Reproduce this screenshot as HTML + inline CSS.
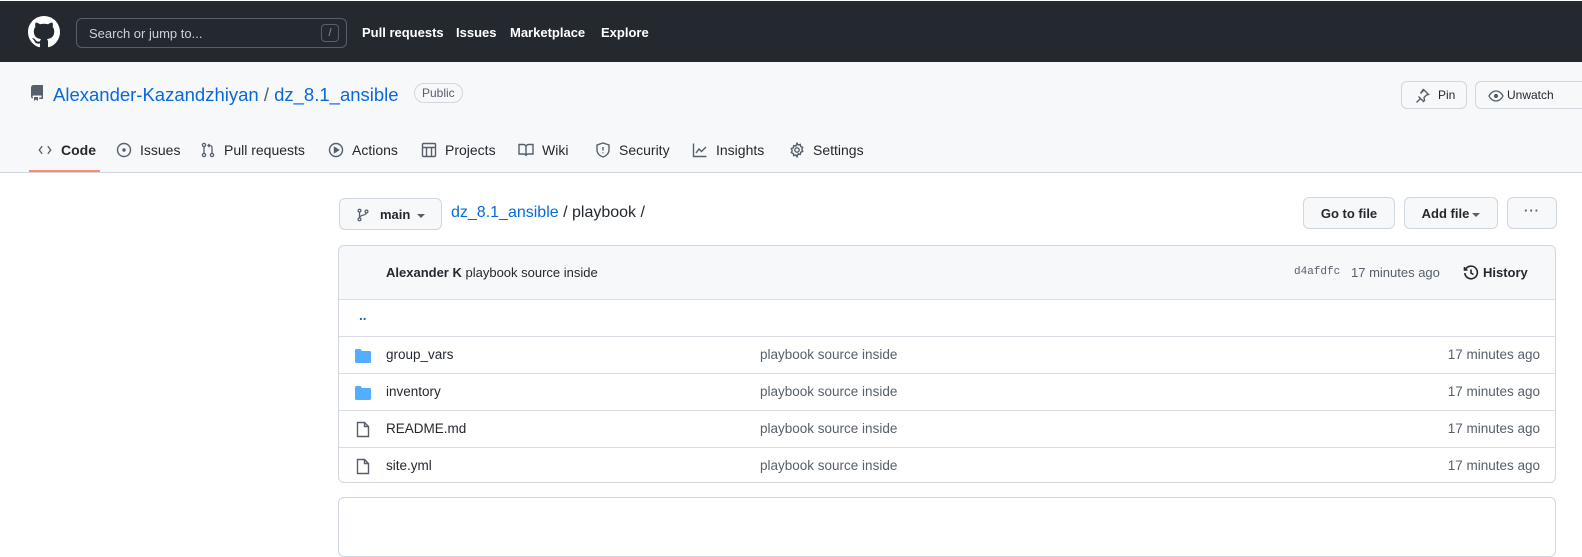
<!DOCTYPE html>
<html><head><meta charset="utf-8"><style>
*{box-sizing:border-box;margin:0;padding:0}
body{width:1582px;height:521px;overflow:hidden;background:#fff;font-family:"Liberation Sans",sans-serif;font-size:14px;color:#24292f;position:relative}
.abs{position:absolute}
.hdr{left:0;top:1px;width:1582px;height:61px;background:#24292f}
.search{left:76px;top:17px;width:271px;height:30px;border:1px solid #57606a;border-radius:6px;color:#c9d1d9;padding:7px 12px;font-size:13px}
.slash{position:absolute;right:7px;top:5px;width:18px;height:18px;border:1px solid #57606a;border-radius:4px;font-size:11px;text-align:center;line-height:16px;color:#8b949e}
.nav{top:24px;color:#fff;font-weight:bold;font-size:13px}
.rh{left:0;top:62px;width:1582px;height:111px;background:#f6f8fa;border-bottom:1px solid #d0d7de}
a{color:#0969da;text-decoration:none}
.btn{border:1px solid #d0d7de;border-radius:6px;background:#f6f8fa;font-size:13px}
.tab{top:142px;font-size:14px;color:#24292f;display:flex;align-items:center;gap:8px}
.box{left:338px;width:1218px;border:1px solid #d0d7de;border-radius:6px}
.row{position:absolute;left:0;width:1216px;height:37px;border-top:1px solid #d8dee4}
.row span{position:absolute;top:10px;font-size:13.5px}
.msg{left:421px;color:#57606a}
.tm{right:15px;color:#57606a}
.car{display:inline-block;width:0;height:0;border-left:4px solid transparent;border-right:4px solid transparent;border-top:4px solid #57606a;vertical-align:middle;margin-left:3px}
</style></head><body>
<div class="abs hdr">
<svg class="abs" style="left:28px;top:15px" width="32" height="32" viewBox="0 0 16 16" fill="#fff"><path d="M8 0C3.58 0 0 3.58 0 8c0 3.54 2.290 6.53 5.47 7.59.4.07.55-.17.55-.38 0-.19-.01-.82-.01-1.49-2.01.37-2.53-.49-2.69-.94-.09-.23-.48-.94-.82-1.130-.28-.15-.68-.52-.01-.53.63-.01 1.08.58 1.23.82.72 1.21 1.87.87 2.33.66.07-.52.28-.87.51-1.07-1.78-.2-3.64-.89-3.64-3.950 0-.87.31-1.59.82-2.15-.08-.2-.36-1.02.08-2.12 0 0 .67-.21 2.2.82.64-.18 1.32-.27 2-.27.68 0 1.36.09 2 .27 1.53-1.04 2.2-.82 2.2-.82.44 1.1.16 1.92.08 2.12.51.56.82 1.27.82 2.15 0 3.07-1.87 3.75-3.65 3.95.29.25.54.73.54 1.48 0 1.07-.01 1.93-.01 2.2 0 .21.15.46.55.38A8.013 8.013 0 0016 8c0-4.42-3.58-8-8-8z"/></svg>
<div class="abs search">Search or jump to...<div class="slash">/</div></div>
<div class="abs nav" style="left:362px">Pull requests</div>
<div class="abs nav" style="left:456px">Issues</div>
<div class="abs nav" style="left:510px">Marketplace</div>
<div class="abs nav" style="left:601px">Explore</div>
</div>
<div class="abs rh">
<svg class="abs" style="left:29px;top:23px" width="16" height="16" viewBox="0 0 16 16" fill="#57606a"><path d="M2 2.5A2.5 2.5 0 014.5 0h8.750a.75.75 0 01.75.75v12.5a.75.75 0 01-.75.75h-2.5a.75.75 0 110-1.5h1.75v-2h-8a1 1 0 00-.71 1.7.75.75 0 01-1.07 1.05A2.5 2.5 0 012 11.5v-9zm10.5-1V9h-8c-.36 0-.7.08-1 .21V2.5a1 1 0 011-1h8zM5 12.25v3.25a.25.25 0 00.4.2l1.45-1.09a.25.25 0 01.3 0l1.45 1.09a.25.25 0 00.4-.2v-3.25a.25.25 0 00-.25-.25h-3.5a.25.25 0 00-.25.25z"/></svg>
<div class="abs" style="left:53px;top:22px;font-size:18.5px"><a href="#">Alexander-Kazandzhiyan</a> <span style="color:#57606a">/</span> <a href="#">dz_8.1_ansible</a></div>
<div class="abs" style="left:414px;top:21px;border:1px solid #d0d7de;border-radius:12px;padding:2px 7px;font-size:12px;color:#57606a">Public</div>
<div class="abs btn" style="left:1401px;top:19px;width:66px;height:28px;padding:6px 0 0 36px;font-size:12px">Pin
<svg class="abs" style="left:12px;top:6px" width="16" height="16" viewBox="0 0 16 16" fill="none" stroke="#57606a" stroke-width="1.4"><path d="M9.5 1.5l5 5-2 .5-2.5 2.5.5 3-1 1-3-3-4 4M4.5 8.5l3 3M6.5 5.5l2.5-2.5.5-2z"/></svg></div>
<div class="abs btn" style="left:1475px;top:19px;width:120px;height:28px;padding:6px 0 0 31px;font-size:12px">Unwatch
<svg class="abs" style="left:12px;top:6px" width="16" height="16" viewBox="0 0 16 16" fill="none" stroke="#57606a" stroke-width="1.3"><path d="M1 8s2.5-5 7-5 7 5 7 5-2.5 5-7 5-7-5-7-5z"/><circle cx="8" cy="8" r="1.5" fill="#57606a"/></svg></div>
<div class="abs" style="left:29px;top:108px;width:71px;height:2px;background:#fd8c73"></div>
</div>
<div class="abs tab" style="left:37px;font-weight:bold"><svg width="16" height="16" viewBox="0 0 16 16" fill="#57606a"><path d="M4.7 3.7L1.4 8l3.3 4.3 1-.8L3.1 8l2.6-3.5zm6.6 0l-1 .8L12.9 8l-2.6 3.5 1 .8L14.6 8z"/></svg>Code</div>
<div class="abs tab" style="left:116px"><svg width="16" height="16" viewBox="0 0 16 16" fill="none" stroke="#57606a" stroke-width="1.4"><circle cx="8" cy="8" r="6.5"/><circle cx="8" cy="8" r="1" fill="#57606a"/></svg>Issues</div>
<div class="abs tab" style="left:200px"><svg width="16" height="16" viewBox="0 0 16 16" fill="none" stroke="#57606a" stroke-width="1.3"><circle cx="4" cy="3" r="1.6"/><circle cx="4" cy="13" r="1.6"/><circle cx="12" cy="13" r="1.6"/><path d="M4 4.6v6.8M12 11.4V5.5a2 2 0 00-2-2H8m1.5-1.5L8 3.5 9.5 5"/></svg>Pull requests</div>
<div class="abs tab" style="left:328px"><svg width="16" height="16" viewBox="0 0 16 16" fill="none" stroke="#57606a" stroke-width="1.4"><circle cx="8" cy="8" r="6.5"/><path d="M6.5 5.5v5l4-2.5z" fill="#57606a"/></svg>Actions</div>
<div class="abs tab" style="left:421px"><svg width="16" height="16" viewBox="0 0 16 16" fill="none" stroke="#57606a" stroke-width="1.4"><rect x="1.5" y="1.5" width="13" height="13" rx="1"/><path d="M1.5 5.5h13M5.5 5.5v9M10.5 5.5v9"/></svg>Projects</div>
<div class="abs tab" style="left:518px"><svg width="16" height="16" viewBox="0 0 16 16" fill="none" stroke="#57606a" stroke-width="1.4"><path d="M1 2.5h4.5A2.5 2.5 0 018 5v9a2 2 0 00-2-2H1zM15 2.5h-4.5A2.5 2.5 0 008 5v9a2 2 0 012-2h5z"/></svg>Wiki</div>
<div class="abs tab" style="left:595px"><svg width="16" height="16" viewBox="0 0 16 16" fill="none" stroke="#57606a" stroke-width="1.4"><path d="M8 1L2 3v5c0 3.5 3 6 6 7 3-1 6-3.5 6-7V3z"/><path d="M8 5v3.5M8 10.5v.8"/></svg>Security</div>
<div class="abs tab" style="left:692px"><svg width="16" height="16" viewBox="0 0 16 16" fill="none" stroke="#57606a" stroke-width="1.4"><path d="M1.5 1.5v13h13M4 11l3-4 2.5 2.5L14 5"/></svg>Insights</div>
<div class="abs tab" style="left:789px"><svg width="16" height="16" viewBox="0 0 16 16" fill="none" stroke="#57606a" stroke-width="1.4"><circle cx="8" cy="8" r="2.2"/><path d="M8 1.2l1.2 1.8 2.1-.6.4 2.1 2 .9-.9 2 .9 2-2 .9-.4 2.1-2.1-.6L8 14.8l-1.2-1.8-2.1.6-.4-2.1-2-.9.9-2-.9-2 2-.9.4-2.1 2.1.6z"/></svg>Settings</div>

<div class="abs btn" style="left:339px;top:198px;width:103px;height:32px;padding:8px 0 0 40px;font-weight:bold;font-size:13px">main<span class="car" style="margin-left:7px"></span>
<svg class="abs" style="left:16px;top:8px" width="14" height="16" viewBox="0 0 16 16" fill="none" stroke="#57606a" stroke-width="1.4"><circle cx="4" cy="3" r="1.6"/><circle cx="4" cy="13" r="1.6"/><circle cx="12" cy="4" r="1.6"/><path d="M4 4.6v6.8M12 5.6c0 3-8 2-8 5.8"/></svg></div>
<div class="abs" style="left:451px;top:204px;font-size:16px"><a href="#">dz_8.1_ansible</a> / <span>playbook</span> /</div>
<div class="abs btn" style="left:1303px;top:197px;width:92px;height:32px;padding:8px 0 0 0;text-align:center;font-weight:bold">Go to file</div>
<div class="abs btn" style="left:1404px;top:197px;width:94px;height:32px;padding:8px 0 0 0;text-align:center;font-weight:bold">Add file<span class="car"></span></div>
<div class="abs btn" style="left:1507px;top:197px;width:50px;height:32px;padding:5px 0 0 0;text-align:center;font-weight:bold;color:#57606a;letter-spacing:1px">···</div>

<div class="abs box" style="top:245px;height:238px">
<div class="abs" style="left:0;top:0;width:1216px;height:53px;background:#f6f8fa;border-radius:6px 6px 0 0;font-size:13px">
<span class="abs" style="left:47px;top:19px"><b>Alexander K</b> playbook source inside</span>
<span class="abs" style="left:955px;top:20px;font-family:'Liberation Mono',monospace;font-size:11px;color:#57606a">d4afdfc</span>
<span class="abs" style="left:1012px;top:19px;color:#57606a">17 minutes ago</span>
<span class="abs" style="left:1144px;top:19px;font-weight:bold">History</span>
<svg class="abs" style="left:1124px;top:19px" width="16" height="16" viewBox="0 0 16 16" fill="none" stroke="#24292f" stroke-width="1.6"><path d="M2.5 4.5A6.3 6.3 0 1 1 1.8 8"/><path d="M1.5 2v3h3M8 4.5V8l2.5 1.5"/></svg>
</div>
<div class="row" style="top:53px"><span style="left:20px;top:8px;color:#0969da;font-weight:bold">..</span></div>
<div class="row" style="top:90px"><svg class="abs" style="left:16px;top:12px" width="16" height="14" viewBox="0 0 16 14"><path d="M0 1.5A1.5 1.5 0 011.5 0h4l1.5 2h7.5A1.5 1.5 0 0116 3.5v9a1.5 1.5 0 01-1.5 1.5h-13A1.5 1.5 0 010 12.5z" fill="#54aeff"/></svg><span style="left:47px">group_vars</span><span class="msg">playbook source inside</span><span class="tm">17 minutes ago</span></div>
<div class="row" style="top:127px"><svg class="abs" style="left:16px;top:12px" width="16" height="14" viewBox="0 0 16 14"><path d="M0 1.5A1.5 1.5 0 011.5 0h4l1.5 2h7.5A1.5 1.5 0 0116 3.5v9a1.5 1.5 0 01-1.5 1.5h-13A1.5 1.5 0 010 12.5z" fill="#54aeff"/></svg><span style="left:47px">inventory</span><span class="msg">playbook source inside</span><span class="tm">17 minutes ago</span></div>
<div class="row" style="top:164px"><svg class="abs" style="left:17px;top:10px" width="14" height="17" viewBox="0 0 14 17" fill="none" stroke="#57606a" stroke-width="1.4"><path d="M1.5 1.5h7l4 4v10h-11z M8.5 1.5v4h4"/></svg><span style="left:47px">README.md</span><span class="msg">playbook source inside</span><span class="tm">17 minutes ago</span></div>
<div class="row" style="top:201px"><svg class="abs" style="left:17px;top:10px" width="14" height="17" viewBox="0 0 14 17" fill="none" stroke="#57606a" stroke-width="1.4"><path d="M1.5 1.5h7l4 4v10h-11z M8.5 1.5v4h4"/></svg><span style="left:47px">site.yml</span><span class="msg">playbook source inside</span><span class="tm">17 minutes ago</span></div>
</div>
<div class="abs box" style="top:497px;height:60px"></div>
</body></html>
